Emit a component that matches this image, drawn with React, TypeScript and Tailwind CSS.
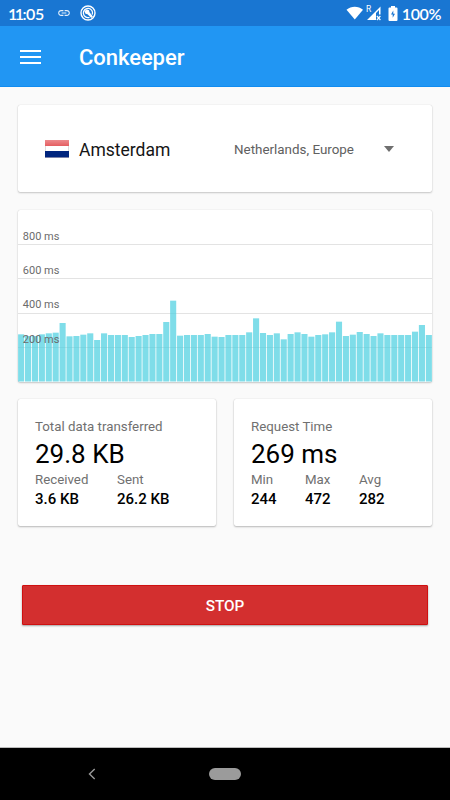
import React from "react";

const BAR_TOPS = [
  163, 168, 168, 163, 160, 158, 129, 169, 168, 164, 160, 180, 160, 165, 165, 165, 171, 168, 165, 162,
  162, 126, 62, 167, 165, 165, 165, 162, 170, 171, 165, 165, 165, 157, 115, 159, 165, 160, 178, 162,
  157, 162, 170, 165, 163, 157, 125, 168, 164, 156, 162, 168, 160, 165, 165, 165, 165, 155, 135, 165,
];

function StatusBar() {
  return (
    <div className="flex h-[26px] items-center bg-[#1976d2] text-white">
      <span className="ml-[8px] mt-px flex w-[49px] font-['Lato'] text-[16px] font-semibold leading-[26px] tracking-[-0.4px]">
        <span className="tracking-[-2.6px]">11</span>
        <span className="ml-[1px]">:05</span>
      </span>
      <svg className="h-[14px] w-[14px]" viewBox="0 0 24 24" fill="#e3effb">
        <path d="M3.9 12c0-1.71 1.39-3.1 3.1-3.1h4V7H7c-2.76 0-5 2.24-5 5s2.24 5 5 5h4v-1.900H7c-1.710 0-3.100-1.390-3.100-3.100zM8 13h8v-2H8v2zm9-6h-4v1.900h4c1.710 0 3.100 1.390 3.100 3.100s-1.390 3.100-3.100 3.100h-4V17h4c2.760 0 5-2.240 5-5s-2.240-5-5-5z" />
      </svg>
      <svg className="ml-[9px] h-[16px] w-[16px]" viewBox="0 0 16 16" fill="none">
        <circle cx="8" cy="8" r="7" stroke="#fff" strokeWidth="1.4" />
        <path d="M12.300 9.500A4.600 4.600 0 1 0 9.500 12.300" stroke="#fff" strokeWidth="1.300" />
        <path d="M4.500 6.200 6.600 4.300 9 5.200 9.500 7.300 12.900 11.500 11.300 13 7.500 9.300 5.500 8.800Z" fill="#fff" />
      </svg>
      <svg className="ml-auto h-[14px] w-[18px]" viewBox="0 0 18 14" fill="#fff">
        <path d="M.5 3.700C5.200-.4 12.300-.4 17 3.700L8.800 13.600Z" />
      </svg>
      <svg className="ml-[2px] h-[16px] w-[17px]" viewBox="0 0 17 16">
        <text x="0" y="7" fontSize="8.500" fontFamily="Roboto, sans-serif" fill="#fff">R</text>
        <path d="M1 15 14.500 1.500V9.500H13V5L10 8V15Z" fill="#fff" />
        <path d="m10.900 11 3.500 4m0-4-3.500 4" stroke="#fff" strokeWidth="1.200" />
      </svg>
      <svg className="ml-[5px] h-[15px] w-[10px]" viewBox="0 0 10 15">
        <path d="M3 0h4v1.500h1.500q1 0 1 1V14q0 1-1 1h-7q-1 0-1-1V2.500q0-1 1-1H3Z" fill="#fff" />
        <path d="M5.300 4.500 3 8.500h1.700v3.200L7 7.700H5.300Z" fill="#1976d2" />
      </svg>
      <span className="ml-[4px] mr-[9px] mt-px font-['Lato'] text-[16px] font-semibold leading-[26px] tracking-[-0.4px]">100%</span>
    </div>
  );
}

function Chart() {
  return (
    <section className="mt-[18px] h-[172px] rounded-[2px] bg-white shadow-[0_1px_2px_rgba(0,0,0,0.2),0_0_1px_rgba(0,0,0,0.2)]">
      <svg className="block h-[172px] w-[414px]" viewBox="0 0 414 172">
        {[34, 68, 103, 137].map((y) => (
          <rect key={y} x="0" y={y} width="414" height="1" fill="#e3e3e3" />
        ))}
        {BAR_TOPS.map((top, i) => (
          <rect key={i} x={0.1 + i * 6.91} y={70 + top / 3} width="6.100" height={101.500 - top / 3} fill="#4dd0e1" fillOpacity="0.72" />
        ))}
        {[800, 600, 400, 200].map((v, i) => (
          <text key={v} x="4.800" y={30 + i * 34.200} fontSize="11" fontFamily="Roboto, sans-serif" fill="#6c6c6c">{v} ms</text>
        ))}
      </svg>
    </section>
  );
}

function Metric({ label, value, className }: { label: string; value: string; className: string }) {
  return (
    <div className={className}>
      <div className="text-[13.3px] leading-[17px] text-[#707070]">{label}</div>
      <div className="text-[15px] font-medium leading-[23px] text-black">{value}</div>
    </div>
  );
}

function StatCard({ title, value, children }: { title: string; value: string; children: React.ReactNode }) {
  return (
    <section className="h-[127px] w-[198px] rounded-[2px] bg-white pl-[17px] pt-[18px] shadow-[0_1px_2px_rgba(0,0,0,0.25),0_0_1px_rgba(0,0,0,0.2)]">
      <div className="text-[13.3px] leading-[20px] text-[#707070]">{title}</div>
      <div className="text-[26px] leading-[34px] text-black">{value}</div>
      <div className="flex">{children}</div>
    </section>
  );
}

export default function App() {
  return (
    <div className="flex h-[800px] w-[450px] flex-col overflow-hidden bg-[#fafafa] font-['Roboto',sans-serif]">
      <StatusBar />
      <header className="flex h-[61px] items-center border-b border-[#118cf0] bg-[#2196f3] pl-[20px]">
        <div className="mt-px flex w-[21px] flex-col gap-[4px]">
          <i className="h-[2px] bg-white" />
          <i className="h-[2px] bg-white" />
          <i className="h-[2px] bg-white" />
        </div>
        <h1 className="ml-[38px] mt-[3px] text-[22px] font-medium tracking-[-0.05px] text-white">Conkeeper</h1>
      </header>
      <main className="flex-1 border-b border-[#bbb] px-[18px] pt-[18px]">
        <section className="flex h-[87px] items-center rounded-[2px] bg-white pl-[27px] shadow-[0_1px_2px_rgba(0,0,0,0.2),0_0_1px_rgba(0,0,0,0.2)]">
          <div className="flex h-[18px] w-[24px] flex-col">
            <i className="h-[6px] bg-gradient-to-b from-[#ec8a8d] to-[#e45d60]" />
            <i className="h-[5px] border-x border-[#ddd] bg-white" />
            <i className="h-[7px] border-b border-[#7b82a8] bg-[#00257e]" />
          </div>
          <span className="ml-[10px] mt-[3px] w-[155px] text-[17.5px] text-[#151515]">Amsterdam</span>
          <span className="mt-[3px] w-[150px] text-[13.4px] text-[#606060]">Netherlands, Europe</span>
          <svg className="h-[6px] w-[10px]" viewBox="0 0 11 6" preserveAspectRatio="none"><path d="M0 0h11L5.500 6Z" fill="#6f6f6f" /></svg>
        </section>
        <Chart />
        <div className="mt-[17px] flex justify-between">
          <StatCard title="Total data transferred" value="29.8 KB">
            <Metric label="Received" value="3.6 KB" className="w-[82px]" />
            <Metric label="Sent" value="26.2 KB" className="w-[70px]" />
          </StatCard>
          <StatCard title="Request Time" value="269 ms">
            <Metric label="Min" value="244" className="w-[54px]" />
            <Metric label="Max" value="472" className="w-[54px]" />
            <Metric label="Avg" value="282" className="w-[54px]" />
          </StatCard>
        </div>
        <button className="mx-auto mt-[59px] block h-[40px] w-[406px] rounded-[1px] border border-[#cf1010] bg-[#d32f2f] text-[15.3px] font-medium leading-[40px] text-white shadow-[0_1px_2px_rgba(0,0,0,0.35)]">STOP</button>
      </main>
      <nav className="flex h-[52px] items-center bg-black">
        <svg className="ml-[88px] h-[12px] w-[8px]" viewBox="0 0 8 12"><path d="M6.700 1 1.500 6l5.200 5" fill="none" stroke="#999" strokeWidth="1.400" /></svg>
        <div className="ml-[113px] h-[12px] w-[32px] rounded-full bg-[#9b9b9b]" />
      </nav>
    </div>
  );
}
